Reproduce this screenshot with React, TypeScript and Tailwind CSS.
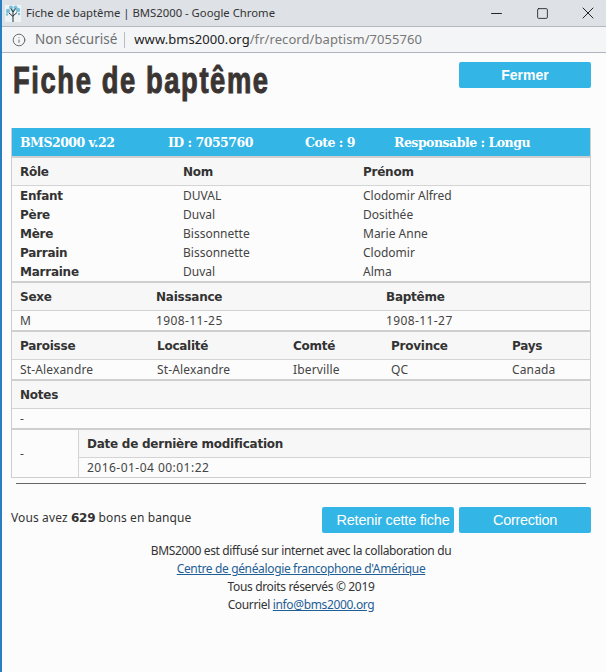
import { Info, Minus, Square, X } from 'lucide-react';

const persons = [
  { role: 'Enfant', nom: 'DUVAL', prenom: 'Clodomir Alfred' },
  { role: 'Père', nom: 'Duval', prenom: 'Dosithée' },
  { role: 'Mère', nom: 'Bissonnette', prenom: 'Marie Anne' },
  { role: 'Parrain', nom: 'Bissonnette', prenom: 'Clodomir' },
  { role: 'Marraine', nom: 'Duval', prenom: 'Alma' },
];

const sans = "font-['Noto_Sans','DejaVu_Sans',sans-serif]";
const bold = "font-['DejaVu_Sans',sans-serif] font-bold text-[12px] tracking-[-0.25px] text-[#333]";
const arial = "font-['Liberation_Sans',sans-serif]";

function TreeLogo() {
  return (
    <svg width="16" height="17" viewBox="0 0 16 17" className="shrink-0">
      <rect x="0" y="0" width="16" height="17" fill="#eef3f5" />
      <g fill="#7cc0d8">
        <circle cx="3" cy="6" r="2.2" />
        <circle cx="13" cy="5" r="2.2" />
        <circle cx="6" cy="2.5" r="2" />
        <circle cx="10.5" cy="2.5" r="2" />
        <circle cx="8" cy="5.5" r="1.6" />
        <circle cx="2" cy="9.5" r="1.2" />
        <circle cx="14" cy="9" r="1.2" />
      </g>
      <path d="M8 17V7M8 11.5L4 8M8 11l4-3.5M8 7L6 3.5M8 7l2.5-3.5" stroke="#26343a" strokeWidth="1" fill="none" />
    </svg>
  );
}

function Button({ label, className }: { label: string; className: string }) {
  return (
    <button className={`h-[26px] bg-[#33b5e5] rounded-[2px] text-white flex items-center justify-center ${className}`}>
      {label}
    </button>
  );
}

function Section({ cols, heads, values, valueClass = '' }: { cols: string; heads: string[]; values: string[]; valueClass?: string }) {
  return (
    <div className="border-t-2 border-[#cfcfcf]">
      <div className={`grid ${cols} h-[28px] items-center pl-2 bg-[#f7f7f7] border-b border-[#d4d4d4] ${bold}`}>
        {heads.map((h) => (
          <div key={h}>{h}</div>
        ))}
      </div>
      <div className={`grid ${cols} h-[19px] items-center pl-2 text-[12px] text-[#444] ${valueClass}`}>
        {values.map((v, i) => (
          <div key={i}>{v}</div>
        ))}
      </div>
    </div>
  );
}

export default function App() {
  return (
    <div className={`w-[606px] h-[672px] overflow-hidden bg-[#fcfcfc] border-l-2 border-[#2a7fc0] ${sans}`}>
      <div className="h-[26px] bg-[#dee1e6] border-b border-[#b4b9bf] flex items-center pl-[3px] box-content">
        <TreeLogo />
        <span className="ml-[5px] text-[11.3px] text-[#333]">Fiche de baptême | BMS2000 - Google Chrome</span>
        <div className="ml-auto flex items-center pr-[8px] text-[#222]">
          <Minus size={17} strokeWidth={1.4} />
          <Square size={13} strokeWidth={1.6} className="ml-[31px]" />
          <X size={20} strokeWidth={1.2} className="ml-[29px]" />
        </div>
      </div>
      <div className="h-[26px] bg-[#f4f5f6] border-b border-[#aeb4ba] flex items-center pl-[10px]">
        <Info size={14} strokeWidth={1.6} className="text-[#5f6368]" />
        <span className="ml-[9px] text-[13.5px] text-[#6b6f73]">Non sécurisé</span>
        <span className="ml-[7px] h-[16px] w-px bg-[#b8bcc0]" />
        <span className="ml-[9px] text-[13px] tracking-[0.07px] text-[#222]">
          www.bms2000.org<span className="text-[#777]">/fr/record/baptism/7055760</span>
        </span>
      </div>

      <div className="pl-[9px] pr-[15px]">
        <div className="flex justify-between items-start h-[75px]">
          <h1 className={`${arial} font-bold text-[36px] leading-[56px] tracking-[2.1px] ml-[2px] text-[#3a3533] [-webkit-text-stroke:1px_#3a3533] origin-left scale-x-[0.76] whitespace-nowrap`}>
            Fiche de baptême
          </h1>
          <Button label="Fermer" className={`w-[132px] mt-[9px] ${arial} font-bold text-[14px]`} />
        </div>

        <div className="border border-[#cfcfcf] border-t-0 w-[580px]">
          <div className="h-[28px] pt-[2px] bg-[#33b5e5] grid grid-cols-[148px_137px_89px_1fr] items-center pl-2 font-['DejaVu_Serif',serif] font-bold text-[12.5px] tracking-[-0.5px] text-white">
            <div>BMS2000 v.22</div>
            <div>ID : 7055760</div>
            <div>Cote : 9</div>
            <div>Responsable : Longu</div>
          </div>

          <div className="border-t-2 border-[#cfcfcf]">
            <div className={`grid grid-cols-[163px_180px_1fr] h-[28px] items-center pl-2 bg-[#f7f7f7] border-b border-[#d4d4d4] ${bold}`}>
              <div>Rôle</div>
              <div>Nom</div>
              <div>Prénom</div>
            </div>
            {persons.map((p) => (
              <div key={p.role} className="grid grid-cols-[163px_180px_1fr] h-[19px] items-center pl-2 text-[12px] text-[#444]">
                <div className={bold}>{p.role}</div>
                <div>{p.nom}</div>
                <div>{p.prenom}</div>
              </div>
            ))}
          </div>

          <Section
            cols="grid-cols-[136px_230px_1fr]"
            heads={['Sexe', 'Naissance', 'Baptême']}
            values={['M', '1908-11-25', '1908-11-27']}
            valueClass="tracking-[0.4px]"
          />
          <Section
            cols="grid-cols-[137px_136px_98px_121px_1fr]"
            heads={['Paroisse', 'Localité', 'Comté', 'Province', 'Pays']}
            values={['St-Alexandre', 'St-Alexandre', 'Iberville', 'QC', 'Canada']}
            valueClass="tracking-[0.15px]"
          />
          <Section cols="grid-cols-1" heads={['Notes']} values={['-']} />

          <div className="border-t-2 border-[#cfcfcf] flex">
            <div className="w-[67px] border-r border-[#d4d4d4] pl-2 flex items-center text-[12px] text-[#444]">-</div>
            <div className="flex-1">
              <div className={`h-[28px] flex items-center pl-2 bg-[#f7f7f7] border-b border-[#d4d4d4] ${bold}`}>
                Date de dernière modification
              </div>
              <div className="h-[19px] flex items-center pl-2 text-[12px] tracking-[0.47px] text-[#444]">2016-01-04 00:01:22</div>
            </div>
          </div>
        </div>

        <div className="mx-[5px] mt-[5px] h-px bg-[#666] w-[570px]" />

        <div className="mt-[23px] flex items-start justify-between w-[580px]">
          <div className="text-[12px] tracking-[0.12px] text-[#333] mt-[2px]">
            Vous avez <b className={bold}>629</b> bons en banque
          </div>
          <div className="flex gap-[5px]">
            <Button label="Retenir cette fiche" className={`w-[132px] pt-[1px] pl-[10px] ${arial} text-[14.5px] tracking-[-0.2px]`} />
            <Button label="Correction" className={`w-[132px] pt-[1px] ${arial} text-[14.5px] tracking-[-0.3px]`} />
          </div>
        </div>

        <div className="mt-[9px] w-[580px] text-center text-[12px] leading-[18px] tracking-[-0.35px] text-[#333]">
          <div>BMS2000 est diffusé sur internet avec la collaboration du</div>
          <div>
            <a className="text-[#1f5f96] underline" href="#">Centre de généalogie francophone d'Amérique</a>
          </div>
          <div>Tous droits réservés © 2019</div>
          <div>
            Courriel <a className="text-[#1f5f96] underline" href="#">info@bms2000.org</a>
          </div>
        </div>
      </div>
    </div>
  );
}
